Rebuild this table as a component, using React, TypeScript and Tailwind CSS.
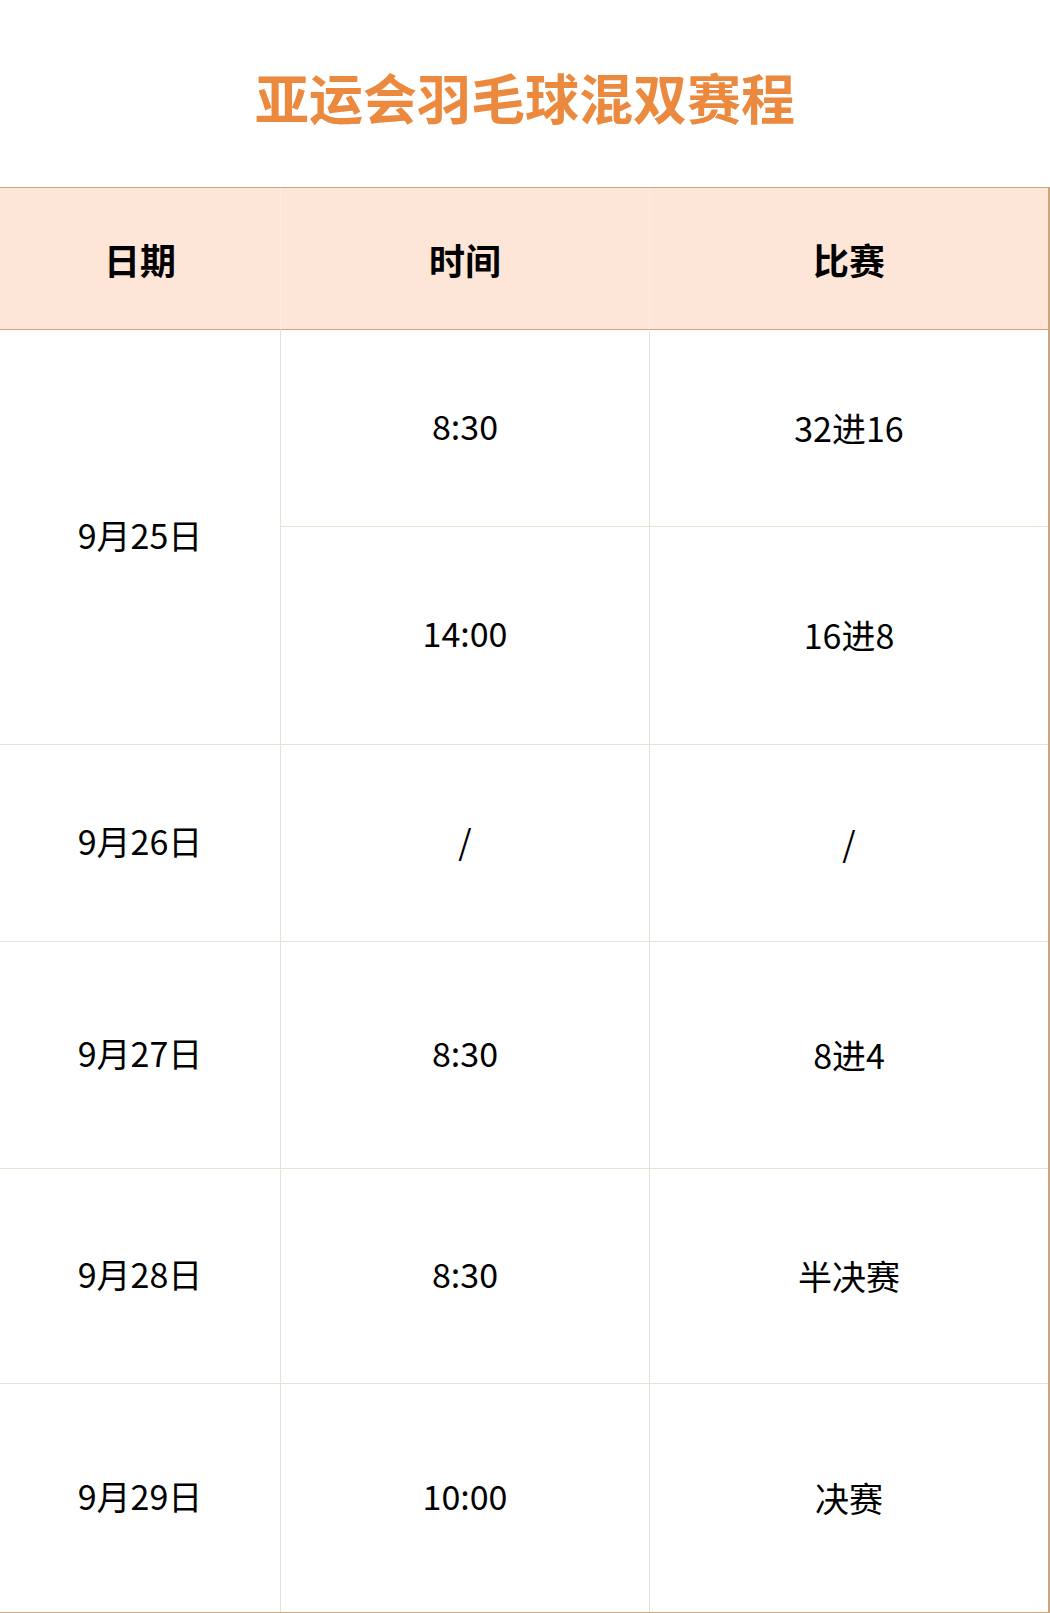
// 亚运会羽毛球混双赛程 表格

const font = { fontFamily: '"Noto Sans CJK SC", "Noto Sans", sans-serif' }

interface Match {
  time: string
  game: string
}

interface DayRow {
  date: string
  matches: Match[]
}

const schedule: DayRow[] = [
  {
    date: '9月25日',
    matches: [
      { time: '8:30', game: '32进16' },
      { time: '14:00', game: '16进8' },
    ],
  },
  { date: '9月26日', matches: [{ time: '/', game: '/' }] },
  { date: '9月27日', matches: [{ time: '8:30', game: '8进4' }] },
  { date: '9月28日', matches: [{ time: '8:30', game: '半决赛' }] },
  { date: '9月29日', matches: [{ time: '10:00', game: '决赛' }] },
]

const cell = 'flex items-center justify-center text-[34px] font-normal text-black pb-[6px]'
const gameCell = 'flex items-center justify-center text-[34px] font-normal text-black pb-[2px]'
const head = 'flex items-center justify-center text-[36px] font-bold text-black bg-[#fde6d7] border-b border-b-[#c9a67e]'

export default function App() {
  return (
    <div className="w-[1050px] bg-white" style={font}>
      {/* 标题 */}
      <div className="h-[187px] flex items-center justify-center pt-[6px]">
        <h1 className="text-[54px] font-bold leading-none text-[#eb8a3e]">
          亚运会羽毛球混双赛程
        </h1>
      </div>

      <div className="grid grid-cols-[281px_369px_1fr] grid-rows-[142px_197px_218px_197px_227px_215px_228px] border-t border-b border-r-2 border-[#c9a67e]">
        {/* 表头 */}
        <div className={`${head} border-r border-r-[#f7efe6]`}>日期</div>
        <div className={`${head} border-r border-r-[#f7efe6]`}>时间</div>
        <div className={head}>比赛</div>

        {/* 9月25日 跨两行 */}
        <div className={`${cell} row-span-2 border-b border-r border-[#e8e0d2]`}>
          {schedule[0].date}
        </div>
        <div className={`${cell} border-b border-r border-[#e8e0d2]`}>8:30</div>
        <div className={`${gameCell} border-b border-[#e8e0d2]`}>32进16</div>
        <div className={`${cell} border-b border-r border-[#e8e0d2]`}>14:00</div>
        <div className={`${gameCell} border-b border-[#e8e0d2]`}>16进8</div>

        {schedule.slice(1).map((row, i) => {
          const last = i === schedule.length - 2
          const bb = last ? '' : 'border-b'
          return [
            <div key={row.date + 'd'} className={`${cell} ${bb} border-r border-[#e8e0d2]`}>
              {row.date}
            </div>,
            <div key={row.date + 't'} className={`${cell} ${bb} border-r border-[#e8e0d2]`}>
              {row.matches[0].time}
            </div>,
            <div key={row.date + 'g'} className={`${gameCell} ${bb} border-[#e8e0d2]`}>
              {row.matches[0].game}
            </div>,
          ]
        })}
      </div>
    </div>
  )
}
